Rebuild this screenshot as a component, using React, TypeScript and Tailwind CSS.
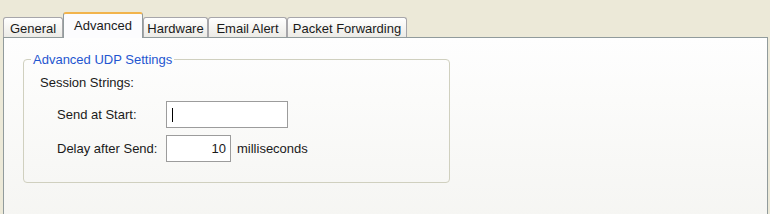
const tabs = [
  { label: "General", w: "w-[60px]" },
  { label: "Advanced", w: "w-[80px]", active: true },
  { label: "Hardware", w: "w-[65px]" },
  { label: "Email Alert", w: "w-[79px]" },
  { label: "Packet Forwarding", w: "w-[120px]" },
];

export default function App() {
  return (
    <div className="w-[770px] h-[214px] overflow-hidden bg-[#ECE9D8] pt-[12px] pl-[3px] font-['Liberation_Sans',Arial,sans-serif] text-[13px] leading-[15px] text-[#1a1a1a]">
      {/* Tab strip */}
      <div className="flex items-end h-[26px] -mb-px">
        {tabs.map((t) =>
          t.active ? (
            <div
              key={t.label}
              className={`${t.w} relative z-10 h-[26px] flex items-center justify-center pb-[2px] bg-[#FCFCFE] border border-b-0 border-[#919B9C] border-t-2 border-t-[#F2B44C] rounded-t-[3px]`}
            >
              {t.label}
            </div>
          ) : (
            <div
              key={t.label}
              className={`${t.w} h-[20px] mb-px pt-px flex items-center justify-center bg-gradient-to-b from-white to-[#ECEBE6] border border-b-0 border-[#A7A6AA] rounded-t-[3px]`}
            >
              {t.label}
            </div>
          )
        )}
      </div>

      {/* Panel */}
      <div className="w-[765px] h-[190px] border border-[#919B9C] bg-gradient-to-b from-[#FEFEFE] to-[#F5F5F2] pl-[19px] pt-[14px]">
        <fieldset className="w-[427px] h-[131px] border border-[#D0D0BF] rounded-[4px]">
          <legend className="ml-[7px] px-[2px] text-[#1F56D0]">Advanced UDP Settings</legend>

          <div className="pl-[16px] pt-[8px]">Session Strings:</div>

          <div className="mt-[11px] pl-[33px] flex flex-col gap-[7px]">
            <div className="flex items-center">
              <span className="w-[109px]">Send at Start:</span>
              <div className="w-[122px] h-[27px] border border-[#9C9C9C] bg-white flex items-center pl-[5px]">
                <span className="w-px h-[14px] bg-black" />
              </div>
            </div>
            <div className="flex items-center">
              <span className="w-[109px]">Delay after Send:</span>
              <div className="w-[65px] h-[27px] border border-[#9C9C9C] bg-white flex items-center justify-end pr-[4px]">
                10
              </div>
              <span className="ml-[6px]">milliseconds</span>
            </div>
          </div>
        </fieldset>
      </div>
    </div>
  );
}
